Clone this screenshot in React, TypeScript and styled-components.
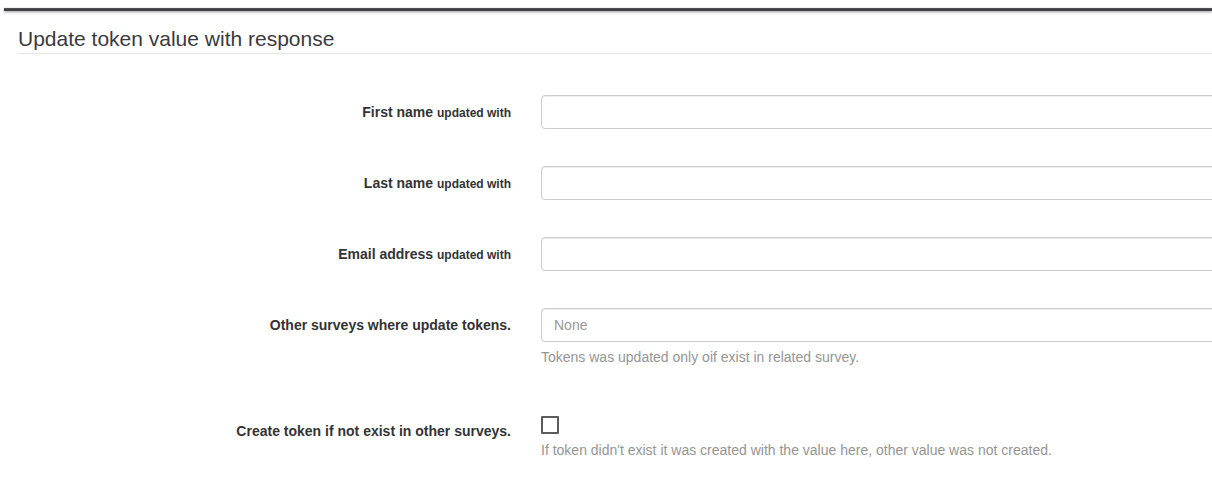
import React from "react";
import styled, { createGlobalStyle } from "styled-components";

const Global = createGlobalStyle`
  html, body {
    margin: 0;
    padding: 0;
    background: #fff;
    overflow: hidden;
  }
  body {
    font-family: "Liberation Sans", Arial, Helvetica, sans-serif;
    font-size: 14px;
    line-height: 20px;
    color: #333;
  }
`;

const Page = styled.div`
  width: 1212px;
  height: 486px;
  overflow: hidden;
  padding-top: 8px;
  box-sizing: border-box;
`;

const TopRule = styled.div`
  margin-left: 4px;
  height: 3px;
  background: linear-gradient(#5a5a5e, #3c3c40 50%, #4a4a4e);
  box-shadow: 0 1px 3px rgba(0, 0, 0, 0.4);
`;

const SectionTitle = styled.h3`
  margin: 17px 0 0 18px;
  padding-bottom: 3px;
  font-size: 21px;
  font-weight: 400;
  line-height: 22px;
  color: #3a3a3e;
  border-bottom: 1px solid #e5e5e5;
`;

const Form = styled.form`
  margin-top: 41px;
`;

const Group = styled.div<{ $gap: number }>`
  display: grid;
  grid-template-columns: 541px 720px;
  margin-bottom: ${(p) => p.$gap}px;
`;

const Label = styled.label`
  padding: 7px 30px 0 0;
  text-align: right;
  font-weight: 700;
  font-size: 14px;
  line-height: 20px;
  color: #333;
`;

const Small = styled.small`
  font-size: 12px;
  font-weight: 700;
`;

const Field = styled.div`
  display: flex;
  flex-direction: column;
  align-items: flex-start;
`;

const TextInput = styled.input`
  box-sizing: border-box;
  width: 100%;
  height: 34px;
  padding: 6px 12px;
  font-family: inherit;
  font-size: 14px;
  color: #555;
  background: #fff;
  border: 1px solid #ccc;
  border-radius: 4px;
  box-shadow: inset 0 1px 1px rgba(0, 0, 0, 0.075);
  outline: none;
  &::placeholder {
    color: #999;
  }
`;

const Check = styled.span`
  box-sizing: border-box;
  display: block;
  width: 18px;
  height: 18px;
  margin-top: 2px;
  border: 2px solid #5c5c5c;
  border-radius: 1px;
  background: #fff;
`;

const Help = styled.p<{ $top: number }>`
  margin: ${(p) => p.$top}px 0 0;
  font-size: 14px;
  line-height: 20px;
  color: #959595;
  white-space: nowrap;
`;

export default function App() {
  return (
    <Page>
      <Global />
      <TopRule />
      <SectionTitle>Update token value with response</SectionTitle>
      <Form onSubmit={(e) => e.preventDefault()}>
        <Group $gap={37}>
          <Label>
            First name <Small>updated with</Small>
          </Label>
          <Field>
            <TextInput type="text" />
          </Field>
        </Group>
        <Group $gap={37}>
          <Label>
            Last name <Small>updated with</Small>
          </Label>
          <Field>
            <TextInput type="text" />
          </Field>
        </Group>
        <Group $gap={37}>
          <Label>
            Email address <Small>updated with</Small>
          </Label>
          <Field>
            <TextInput type="text" />
          </Field>
        </Group>
        <Group $gap={47}>
          <Label>Other surveys where update tokens.</Label>
          <Field>
            <TextInput type="text" placeholder="None" />
            <Help $top={5}>Tokens was updated only oif exist in related survey.</Help>
          </Field>
        </Group>
        <Group $gap={0}>
          <Label>Create token if not exist in other surveys.</Label>
          <Field>
            <Check role="checkbox" aria-checked="false" />
            <Help $top={6}>
              If token didn't exist it was created with the value here, other value was not created.
            </Help>
          </Field>
        </Group>
      </Form>
    </Page>
  );
}
